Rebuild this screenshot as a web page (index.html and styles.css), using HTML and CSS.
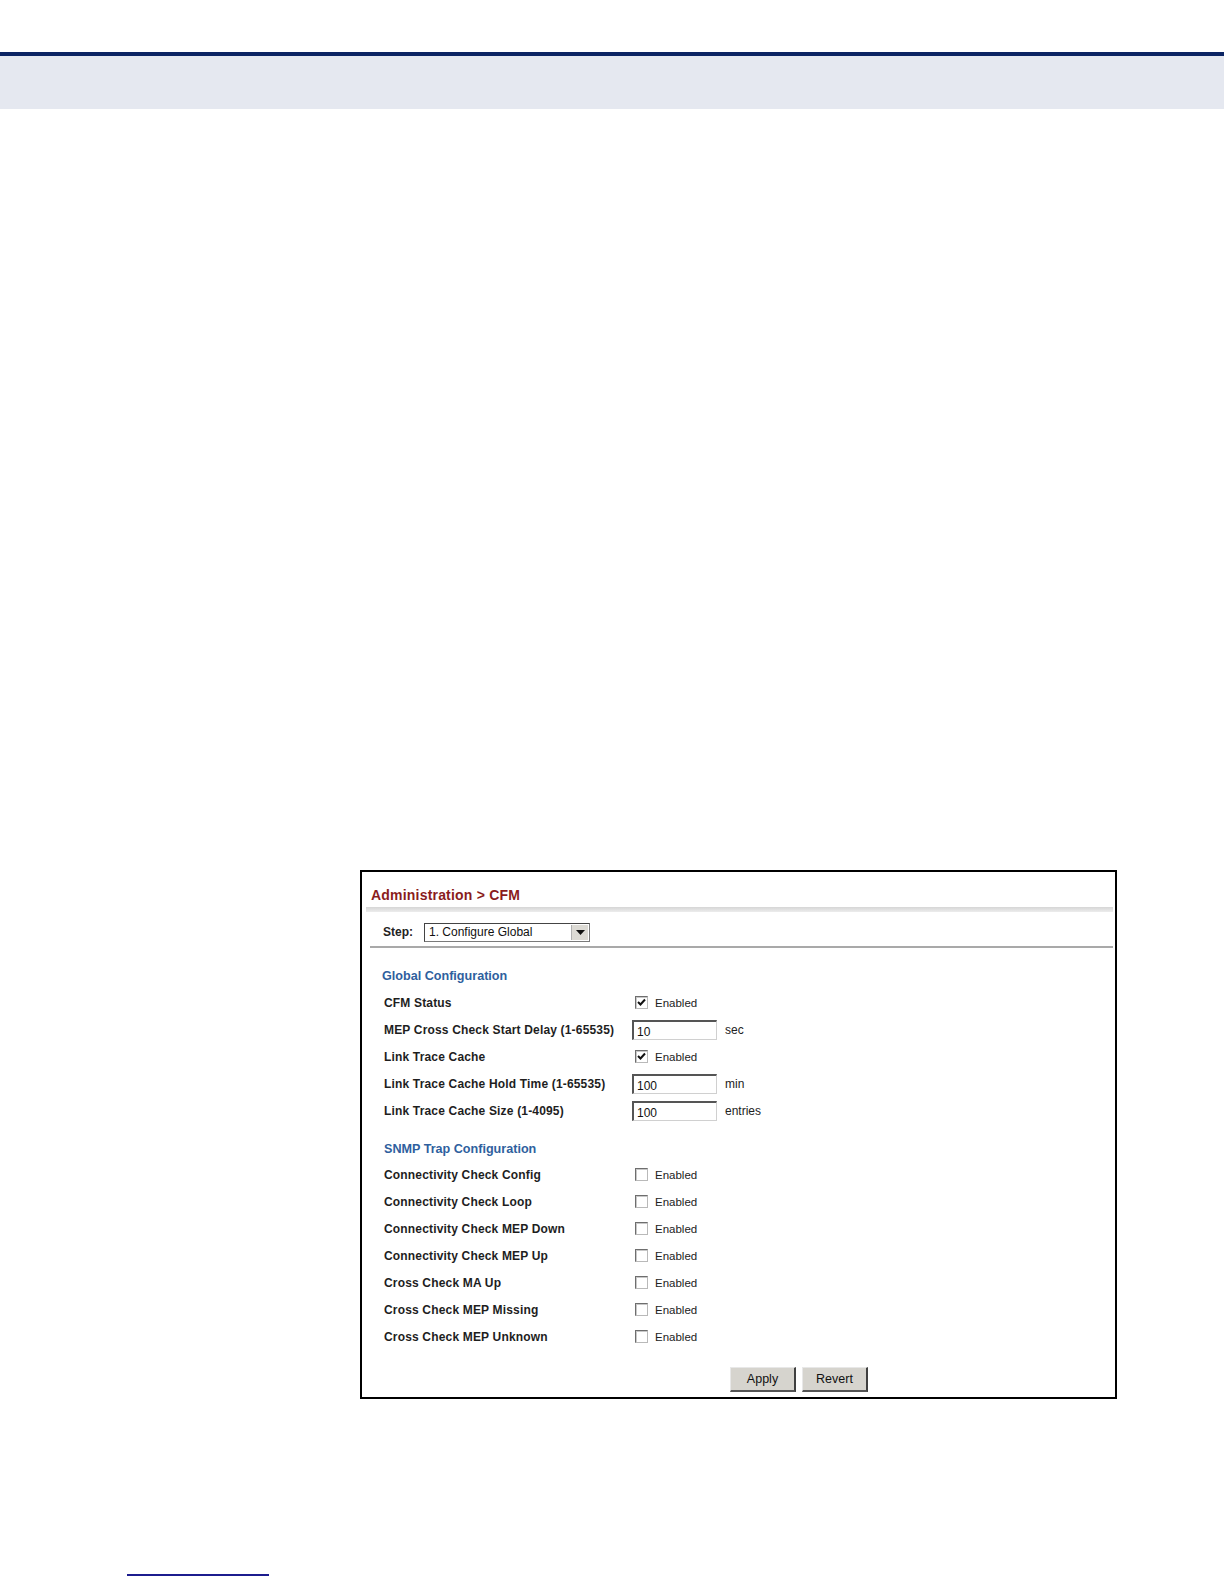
FILE: index.html
```html
<!DOCTYPE html>
<html lang="en">
<head>
    <meta charset="UTF-8">
    <meta name="viewport" content="width=device-width, initial-scale=1.0">
    <title>Administration &gt; CFM</title>
    <link rel="stylesheet" href="styles.css">
</head>
<body>
    <div class="top-rule"></div>
    <div class="top-band"></div>

    <section class="shot">
        <h1 class="title">Administration &gt; CFM</h1>
        <div class="title-bar"></div>

        <div class="step-row">
            <span class="step-label">Step:</span>
            <div class="select">
                <span class="select-text">1. Configure Global</span>
                <span class="select-arrow">
                    <svg width="9" height="5" viewBox="0 0 9 5"><path d="M0 0h9L4.5 5z" fill="#111"/></svg>
                </span>
            </div>
        </div>
        <div class="step-line"></div>

        <h2 class="group-title global">Global Configuration</h2>
        <div class="rows">
            <div class="row">
                <span class="label">CFM Status</span>
                <span class="check on"><svg width="9" height="9" viewBox="0 0 9 9"><path d="M1 4l2.5 2.5L8 1.5" fill="none" stroke="#111" stroke-width="2"/></svg></span>
                <span class="opt">Enabled</span>
            </div>
            <div class="row">
                <span class="label">MEP Cross Check Start Delay (1-65535)</span>
                <span class="field">10</span>
                <span class="unit">sec</span>
            </div>
            <div class="row">
                <span class="label">Link Trace Cache</span>
                <span class="check on"><svg width="9" height="9" viewBox="0 0 9 9"><path d="M1 4l2.5 2.5L8 1.5" fill="none" stroke="#111" stroke-width="2"/></svg></span>
                <span class="opt">Enabled</span>
            </div>
            <div class="row">
                <span class="label">Link Trace Cache Hold Time (1-65535)</span>
                <span class="field">100</span>
                <span class="unit">min</span>
            </div>
            <div class="row">
                <span class="label">Link Trace Cache Size (1-4095)</span>
                <span class="field">100</span>
                <span class="unit">entries</span>
            </div>
        </div>

        <h2 class="group-title snmp">SNMP Trap Configuration</h2>
        <div class="rows">
            <div class="row">
                <span class="label">Connectivity Check Config</span>
                <span class="check"></span>
                <span class="opt">Enabled</span>
            </div>
            <div class="row">
                <span class="label">Connectivity Check Loop</span>
                <span class="check"></span>
                <span class="opt">Enabled</span>
            </div>
            <div class="row">
                <span class="label">Connectivity Check MEP Down</span>
                <span class="check"></span>
                <span class="opt">Enabled</span>
            </div>
            <div class="row">
                <span class="label">Connectivity Check MEP Up</span>
                <span class="check"></span>
                <span class="opt">Enabled</span>
            </div>
            <div class="row">
                <span class="label">Cross Check MA Up</span>
                <span class="check"></span>
                <span class="opt">Enabled</span>
            </div>
            <div class="row">
                <span class="label">Cross Check MEP Missing</span>
                <span class="check"></span>
                <span class="opt">Enabled</span>
            </div>
            <div class="row">
                <span class="label">Cross Check MEP Unknown</span>
                <span class="check"></span>
                <span class="opt">Enabled</span>
            </div>
        </div>

        <div class="buttons">
            <button class="btn">Apply</button>
            <button class="btn">Revert</button>
        </div>
    </section>

    <div class="foot-rule"></div>
</body>
</html>
```

FILE: styles.css
```css
body{
    margin: 0;
    background: #fff;
    font-family: "Liberation Sans", Arial, sans-serif;
    color: #222;
}
.top-rule{
    margin-top: 52px;
    height: 4px;
    background-color: #0b2463;
}
.top-band{
    height: 53px;
    background-color: #e5e8f0;
}
/* the screenshot frame */
.shot{
    box-sizing: border-box;
    width: 757px;
    height: 529px;
    margin: 761px 0 0 360px;
    border: 2px solid #000;
    padding-bottom: 5px;
}
.title{
    margin: 15px 0 0 9px;
    height: 16px;
    line-height: 16px;
    font-size: 14px;
    font-weight: 700;
    letter-spacing: 0.2px;
    color: #8a1c1c;
}
.title-bar{
    margin: 4px 2px 0 4px;
    height: 5px;
    background: linear-gradient(#d6d6d6, #ececec);
}
.step-row{
    display: flex;
    align-items: center;
    height: 20px;
    margin-top: 10px;
    padding-left: 21px;
}
.step-label{
    width: 41px;
    font-size: 12px;
    font-weight: 700;
}
.select{
    box-sizing: border-box;
    width: 166px;
    height: 19px;
    display: flex;
    align-items: center;
    border: 1px solid #7a7a7a;
    border-top-color: #444;
    border-left-color: #444;
    background: #fff;
}
.select-text{
    flex: 1;
    padding-left: 4px;
    font-size: 12px;
    color: #111;
}
.select-arrow{
    width: 16px;
    height: 15px;
    margin-right: 1px;
    display: flex;
    justify-content: center;
    align-items: center;
    background: #dcdad4;
    border-left: 1px solid #b0b0b0;
}
.step-line{
    margin: 4px 2px 0 8px;
    height: 2px;
    background-color: #a9a9a9;
}
.group-title{
    margin: 0;
    height: 16px;
    line-height: 16px;
    font-size: 12.6px;
    font-weight: 700;
    color: #2f5f9e;
}
.group-title.global{
    margin-top: 20px;
    padding-left: 20px;
}
.group-title.snmp{
    margin-top: 17px;
    padding-left: 22px;
}
.rows{
    margin-top: 5px;
}
.snmp + .rows{
    margin-top: 4px;
}
.row{
    display: flex;
    align-items: center;
    height: 27px;
    padding-left: 22px;
}
.label{
    width: 248px;
    padding-top: 1px;
    font-size: 12px;
    font-weight: 700;
    letter-spacing: 0.17px;
    color: #1e1e1e;
}
.check{
    box-sizing: border-box;
    width: 13px;
    height: 13px;
    margin-left: 3px;
    display: flex;
    justify-content: center;
    align-items: center;
    border: 1px solid #6e6e6e;
    border-right-color: #b9b9b9;
    border-bottom-color: #b9b9b9;
    background: #fff;
    box-shadow: inset 1px 1px 0 #c8c8c8;
}
.opt{
    margin-left: 7px;
    font-size: 11.5px;
    color: #222;
}
.field{
    box-sizing: border-box;
    width: 85px;
    height: 20px;
    padding: 3px 0 0 3px;
    font-size: 12px;
    color: #111;
    border: 1px solid #d0d0d0;
    border-top: 2px solid #555;
    border-left: 2px solid #555;
}
.unit{
    margin-left: 8px;
    font-size: 12px;
}
.buttons{
    display: flex;
    gap: 6px;
    margin-top: 17px;
    padding-left: 368px;
}
.btn{
    box-sizing: border-box;
    width: 66px;
    height: 25px;
    padding: 0;
    font-family: "Liberation Sans", Arial, sans-serif;
    font-size: 12.5px;
    color: #111;
    background: #d6d4ce;
    border: 1px solid #e8e8e8;
    border-right: 2px solid #404040;
    border-bottom: 2px solid #555;
}
.foot-rule{
    margin: 175px 0 0 127px;
    width: 142px;
    height: 2px;
    background-color: #1c1c8e;
}
```
